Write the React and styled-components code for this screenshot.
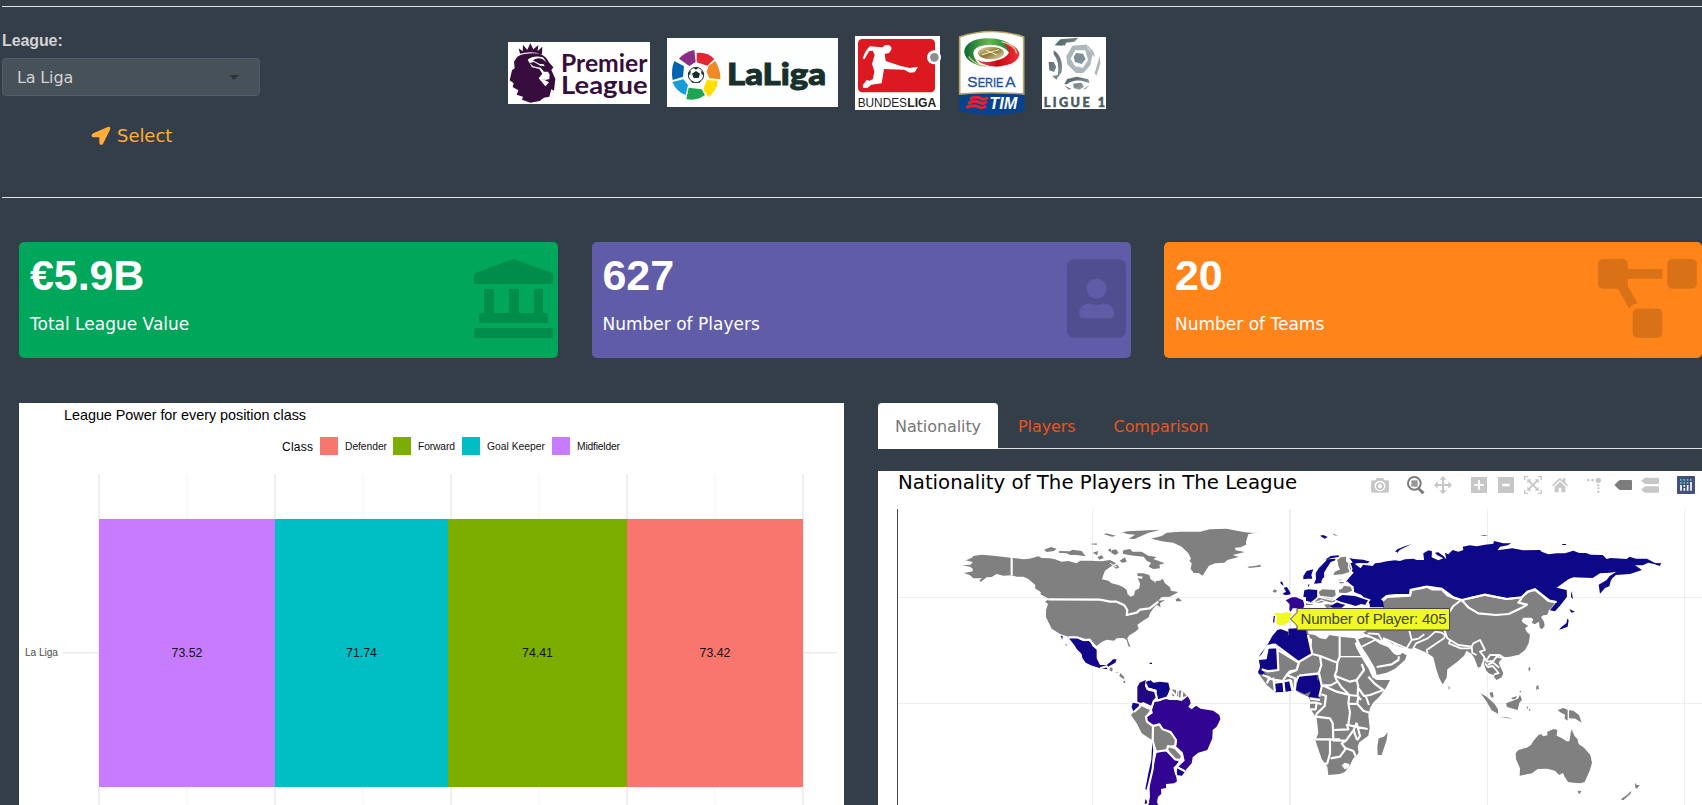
import React from "react";
import styled, { createGlobalStyle } from "styled-components";
import { FaPortrait, FaProjectDiagram } from "react-icons/fa";

const GlobalStyle = createGlobalStyle`
  * { box-sizing: border-box; }
  body {
    margin: 0;
    background: #343e48;
    overflow: hidden;
    font-family: "DejaVu Sans", Verdana, sans-serif;
    font-size: 16px;
    color: #fff;
  }
  svg { display: block; }
`;

const Page = styled.main`
  height: 805px;
  overflow: hidden;
  padding-top: 6px;
`;

const FilterBar = styled.section`
  display: flex;
  height: 192px;
  margin-left: 2px;
  border-top: 1px solid #dee2e6;
  border-bottom: 1px solid #dee2e6;
`;

const FilterColumn = styled.div`
  width: 506px;
  padding-top: 24px;
`;

const Label = styled.label`
  display: block;
  font: bold 16px/20px "Liberation Sans", Arial, sans-serif;
  letter-spacing: -0.1px;
  color: #d3d3d3;
`;

const SelectBox = styled.div`
  display: flex;
  align-items: center;
  justify-content: space-between;
  width: 258px;
  height: 38px;
  margin-top: 7px;
  padding: 0 20px 0 14px;
  border: 1px solid #4e5d6c;
  border-radius: 4px;
  background: #46515a;
  color: #d3d3d3;
  font-size: 16px;
  letter-spacing: -0.15px;
`;

const Caret = styled.span`
  border: 5px solid transparent;
  border-top-color: #333;
  border-bottom: 0;
`;

const SelectButton = styled.button`
  display: flex;
  align-items: center;
  gap: 6px;
  margin: 28px 0 0 89px;
  padding: 0;
  border: 0;
  background: none;
  color: #ffac38;
  font: 18px/24px "DejaVu Sans", Verdana, sans-serif;
  letter-spacing: -0.05px;
`;

const Logos = styled.div`
  display: flex;
  align-items: center;
  gap: 17px;
  height: 131px;
  svg { overflow: visible; }
  svg:nth-child(4) { margin-left: 2px; }
`;

const Cards = styled.section`
  display: grid;
  grid-template-columns: 539px 539px 538px;
  justify-content: space-between;
  padding: 44px 0 0 19px;
`;

const Card = styled.article`
  display: flex;
  justify-content: space-between;
  height: 116px;
  padding: 17px 5px 0 11px;
  border-radius: 5px;
  background: ${(p) => p.$color};
`;

const CardIcon = styled.div`
  color: rgba(0, 0, 0, 0.15);
  svg { width: ${(p) => p.$width}px; height: 79px; }
`;

const Value = styled.h3`
  margin: -8px 0 0;
  font: bold 43px/48px "Liberation Sans", Arial, sans-serif;
  letter-spacing: -0.1px;
`;

const Caption = styled.p`
  margin: 13px 0 0;
  font-size: 17px;
  line-height: 24px;
`;

const Panels = styled.section`
  display: grid;
  grid-template-columns: 825px 824px;
  gap: 34px;
  padding: 45px 0 0 19px;
`;

const ChartPanel = styled.div`
  height: 402px;
  background: #fff;
`;

const Tabs = styled.nav`
  display: flex;
  height: 46px;
  border-bottom: 1px solid #dee2e6;
`;

const Tab = styled.a`
  height: 46px;
  padding: 0 ${(p) => (p.$active ? 17 : 20)}px;
  border-radius: 4px 4px 0 0;
  background: ${(p) => (p.$active ? "#fff" : "transparent")};
  color: ${(p) => (p.$active ? "#777" : "#e95420")};
  line-height: 47px;
  font-size: 16px;
  letter-spacing: -0.08px;
  & + & { padding-right: 18px; }
`;

const MapPanel = styled.div`
  height: 334px;
  margin-top: 22px;
  background: #fff;
`;

const MapHeader = styled.header`
  display: flex;
  justify-content: space-between;
  height: 30px;
  padding: 0 7px 0 20px;
`;

const MapTitle = styled.h4`
  margin: 0;
  color: #000;
  font-size: 19.75px;
  font-weight: 400;
  line-height: 24px;
  white-space: nowrap;
`;

const ModeBar = styled.div`
  display: flex;
  gap: 18px;
  padding-top: 5px;
`;

const ModeGroup = styled.div`
  display: flex;
  gap: 9px;
`;

function Premier() {
  return (
    <svg width="142" height="62" viewBox="54 66 426 186">
      <rect x="54" y="66" width="426" height="186" fill="#fff" />
      <path fill="#370d3d" d="M90 101 L86 85 L98 94 L99 75 L112 89 L121 70 L130 88 L145 75 L143 93 L157 80 L156 103 Q123 91 90 101Z M82 110 Q105 97 150 101 Q170 110 176 126 L190 142 L184 150 L196 177 L192 212 L184 208 L178 230 L162 233 L149 243 L121 248 L96 239 L99 230 L80 224 L85 211 L68 201 L71 190 L59 181 L66 151 L74 145 L72 125Z" />
      <path fill="#fff" d="M113 119 Q132 104 159 112 L170 127 L158 118 Q144 111 128 121 L149 132 L161 133 L179 164 L178 177 L166 180 L156 176 L177 187 L166 199 L153 183 L146 175 L157 161 L148 147 L126 142Z" />
      <path fill="#370d3d" d="M119 129 L132 126 L151 137 L169 139 L176 155 L162 155 L152 143 L130 139Z" />
      <g fill="#370d3d" fontFamily="Lato, sans-serif" fontWeight="700" fontSize="76">
        <text x="213" y="157" textLength="259" lengthAdjust="spacingAndGlyphs">Premier</text>
        <text x="213" y="222" textLength="260" lengthAdjust="spacingAndGlyphs">League</text>
      </g>
    </svg>
  );
}

function LaLiga() {
  return (
    <svg width="171" height="69" viewBox="531 54 513 207">
      <rect x="531" y="54" width="513" height="207" fill="#fdfefe" />
      <path fill="#8a2d87" d="M567 116 Q584 96 613 90 L617 126 L598 138Z" />
      <path fill="#e32832" d="M620 99 Q650 94 673 117 L652 137 L620 127Z" />
      <path fill="#f18a25" d="M656 137 L676 123 Q692 149 691 178 L658 175 L650 155Z" />
      <path fill="#ffde00" d="M650 180 L684 182 Q680 212 655 232 L640 208Z" />
      <path fill="#1da651" d="M596 203 L635 208 L645 225 Q620 244 589 237Z" />
      <path fill="#189cd9" d="M547 186 L580 178 L594 195 L587 225 Q560 216 547 186Z" />
      <path fill="#0063b0" d="M553 123 L582 139 L579 170 L548 180 Q542 150 553 123Z" />
      <circle cx="618" cy="165" r="23" fill="#fff" stroke="#18302b" strokeWidth="3" />
      <path fill="#18302b" d="M618 153 L630 161 L626 174 L611 174 L606 161Z M610 143 L625 143 L618 149Z M594 160 L603 152 L600 166Z M642 160 L632 152 L636 166Z M604 181 L613 187 L606 188Z M624 187 L633 181 L629 189Z" />
      <text x="711" y="194" textLength="297" lengthAdjust="spacingAndGlyphs" fontFamily="Lato, sans-serif" fontWeight="900" fontSize="91" fill="#18302b" stroke="#18302b" strokeWidth="3">LaLiga</text>
    </svg>
  );
}

function Bundesliga() {
  return (
    <svg width="85" height="74" viewBox="45 48 255 222">
      <rect x="45" y="48" width="255" height="222" fill="#fff" />
      <rect x="54" y="57" width="231" height="160" rx="13" fill="#dc1920" />
      <circle cx="282" cy="112" r="21" fill="#fff" />
      <circle cx="283" cy="112" r="13" fill="#8b8d8e" />
      <path fill="#fff" d="M68 116 Q76 89 90 79 L115 81 L128 82 Q133 73 146 75 Q158 81 153 91 L147 99 L134 102 L137 123 L180 137 L209 144 L234 140 L224 157 L210 158 L192 149 L132 147 L125 190 L94 194 L83 203 L70 204 L68 196 L80 180 L89 182 L99 177 L103 154 L96 132 L104 105 L98 92 L88 93 L80 106 L74 117Z" />
      <text x="53" y="261" fontFamily="Liberation Sans, sans-serif" fontSize="38" fill="#222" textLength="148" lengthAdjust="spacingAndGlyphs">BUNDES</text>
      <text x="202" y="261" fontFamily="Liberation Sans, sans-serif" fontSize="38" fontWeight="700" fill="#222" textLength="87" lengthAdjust="spacingAndGlyphs">LIGA</text>
    </svg>
  );
}

function SerieA() {
  return (
    <svg width="66" height="84" viewBox="357 30 198 252">
      <defs>
        <linearGradient id="gold" x2="1" y2="1"><stop stopColor="#ece5bd" /><stop offset=".5" stopColor="#8b7738" /><stop offset="1" stopColor="#ece5bd" /></linearGradient>
        <linearGradient id="green" x2="1"><stop stopColor="#0b6832" /><stop offset=".5" stopColor="#68b74c" /><stop offset="1" stopColor="#087537" /></linearGradient>
        <linearGradient id="red" x2="1"><stop stopColor="#ed5360" /><stop offset=".5" stopColor="#c90713" /><stop offset="1" stopColor="#f03337" /></linearGradient>
      </defs>
      <path d="M359 48 Q455 15 551 48 V219 H359Z" fill="#fff" stroke="#b6a768" strokeWidth="5" />
      <path d="M358 221 Q455 213 553 221 V271 Q455 293 358 271Z" fill="#07428c" />
      <path d="M358 219 Q455 211 553 219" fill="none" stroke="#b6a768" strokeWidth="4" />
      <path fill="url(#green)" d="M426 137 Q370 120 373 88 Q381 56 435 52 Q493 49 522 79 L506 93 Q484 68 439 72 Q399 76 400 99 Q404 120 426 137Z" />
      <path fill="url(#red)" d="M408 114 Q429 128 463 120 Q500 112 506 96 Q508 82 488 64 Q536 75 538 99 Q534 133 469 137 Q426 135 408 114Z" />
      <path fill="none" stroke="#d1c795" strokeWidth="4" d="M386 107 Q406 133 439 136 M484 62 Q528 74 530 98" />
      <ellipse cx="453" cy="96" rx="39" ry="19" fill="url(#gold)" />
      <path d="M426 101 L477 86 M439 88 L471 102" stroke="#fff3bc" strokeWidth="3" />
      <g fontFamily="Liberation Sans, sans-serif" fill="#20549a" stroke="#20549a" strokeWidth="1">
        <text x="382" y="197" fontSize="46">S</text>
        <text x="413" y="197" fontSize="38" textLength="77" lengthAdjust="spacingAndGlyphs">ERIE</text>
        <text x="496" y="197" fontSize="46">A</text>
      </g>
      <path d="M390 234 Q407 224 422 232 Q434 239 444 229 M384 247 Q402 237 418 244 Q431 251 441 242 M379 260 Q398 250 414 257 Q429 264 438 255" fill="none" stroke="#df2532" strokeWidth="9" />
      <text x="448" y="265" fontFamily="Liberation Sans, sans-serif" fontWeight="700" fontStyle="italic" fontSize="48" fill="#fff" textLength="84" lengthAdjust="spacingAndGlyphs">TIM</text>
    </svg>
  );
}

function LigueOne() {
  return (
    <svg width="64" height="72" viewBox="606 51 192 216">
      <defs><linearGradient id="steel" x2="1" y2="1"><stop stopColor="#46545c" /><stop offset="1" stopColor="#a4b0b2" /></linearGradient></defs>
      <rect x="606" y="51" width="192" height="216" fill="#fff" />
      <path fill="url(#steel)" d="M644 76 L661 58 L715 53 L703 65 L677 68 L667 77Z M661 72 L680 66 L674 77Z M641 91 Q671 111 665 156 L649 179 L637 168 L653 165 Q660 125 641 103Z M626 126 L641 126 L649 141 L642 156 L628 151Z" />
      <path fill="#aeb7ba" fillRule="evenodd" d="M679 109 L697 77 L733 74 L758 101 L751 136 L730 159 L708 159 L682 133Z M692 116 L706 91 L736 91 L744 120 L729 143 L705 139Z" />
      <path fill="#7e9098" d="M708 99 L729 101 L737 117 L725 132 L705 126 L701 111Z" />
      <path fill="#afb7b7" d="M736 72 Q766 92 764 112 L755 101 Q751 85 733 78Z M779 108 L781 132 L769 168 L764 159 L773 129Z" />
      <path fill="url(#steel)" d="M673 192 L682 177 L711 170 L745 178 L749 190 L737 186 Q704 175 681 193Z M700 191 L724 188 L732 200 L718 209 L701 204Z M673 197 L694 206 L687 209Z M748 195 L737 208 L729 208Z" />
      <text x="611" y="262" fontFamily="Lato, sans-serif" fontWeight="900" fontSize="38" fill="#4c5961" stroke="#4c5961" strokeWidth="1.5" textLength="184">LIGUE 1</text>
    </svg>
  );
}

function ArrowIcon() {
  return (
    <svg width="20" height="20" viewBox="272 376 60 60" fill="currentColor">
      <path d="M322 379Q332 376 329 387L309 428Q307 433 302 433Q297 432 297 426V410H280Q274 410 274 405Q273 401 279 398Z" />
    </svg>
  );
}

function BankIcon() {
  return (
    <svg viewBox="0 0 79 79" fill="currentColor">
      <path d="M39.5 0 78 14Q79 14.4 79 16V23Q79 25 77 25H2Q0 25 0 23V16Q0 14.4 1 14Z M10 30H20V54H35V30H45V54H60V30H69V54H72Q74 54 74 57V64H5V57Q5 54 7 54H10Z M2 69H77Q79 69 79 71V77Q79 79 77 79H2Q0 79 0 77V71Q0 69 2 69Z" />
    </svg>
  );
}

const series = [
  { name: "Midfielder", value: "73.52", x: 99, w: 176, color: "#c77cff" },
  { name: "Goal Keeper", value: "71.74", x: 275, w: 173, color: "#00bfc4" },
  { name: "Forward", value: "74.41", x: 448, w: 179, color: "#7cae00" },
  { name: "Defender", value: "73.42", x: 627, w: 176, color: "#f8766d" },
];

const legend = [
  { name: "Defender", x: 320, w: 42, color: "#f8766d" },
  { name: "Forward", x: 393, w: 37, color: "#7cae00" },
  { name: "Goal Keeper", x: 462, w: 58, color: "#00bfc4" },
  { name: "Midfielder", x: 552, w: 43, color: "#c77cff" },
];

function PowerChart() {
  return (
    <svg width="825" height="402" viewBox="19 403 825 402" fontFamily="Liberation Sans, Helvetica, sans-serif">
      {[99, 187, 275, 363, 451, 539, 627, 715, 803].map((x, i) => (
        <path key={x} d={`M${x} 474V805`} stroke={i % 2 ? "#f3f3f3" : "#ebebeb"} strokeWidth={i % 2 ? 1 : 1.6} />
      ))}
      <path d="M63 652.7H837" stroke="#ebebeb" strokeWidth="1.5" />
      <text x="64" y="420" fontSize="14.4" textLength="242" fill="#000">League Power for every position class</text>
      <text x="282" y="451" fontSize="12" textLength="31" fill="#000">Class</text>
      {legend.map((l) => (
        <g key={l.name}>
          <rect x={l.x} y="437" width="18" height="18" fill={l.color} />
          <text x={l.x + 25} y="450" fontSize="10.3" textLength={l.w} fill="#111">{l.name}</text>
        </g>
      ))}
      {series.map((s) => (
        <g key={s.name}>
          <rect x={s.x} y="519" width={s.w} height="268" fill={s.color} />
          <text x={s.x + s.w / 2} y="656.8" fontSize="12.3" textAnchor="middle" fill="#111">{s.value}</text>
        </g>
      ))}
      <text x="25" y="656.3" fontSize="10.2" textLength="33" fill="#4d4d4d">La Liga</text>
    </svg>
  );
}

const Tool = ({ x, color = "#c7c7c7", children }) => (
  <svg width="18" height="18" viewBox={`${x} 24 54 54`} fill={color}>{children}</svg>
);

function MapTools() {
  return (
    <ModeBar>
      <Tool x={33}><path fillRule="evenodd" d="M39 37H46L50 30H69L73 37H82Q87 37 87 42V69Q87 74 82 74H38Q33 74 33 69V42Q33 37 39 37Z M60 38A16 16 0 1 0 60.1 38Z" /><path fillRule="evenodd" d="M60 43A12 12 0 1 0 60.1 43Z M60 49A6 6 0 1 1 59.9 49Z" /></Tool>
      <ModeGroup>
        <Tool x={141} color="#7c7c7c"><path fillRule="evenodd" d="M163 24A22 22 0 1 0 163.1 24Z M163 30A16 16 0 1 1 162.9 30Z" /><path d="M154 37H173V56H154Z" opacity=".8" /><path d="M177 58L194 73L187 79L171 63Z" /></Tool>
        <Tool x={222}><path d="M249 24L260 35H252V48H265V40L276 51L265 62V54H252V67H260L249 78L238 67H246V54H233V62L222 51L233 40V48H246V35H238Z" /></Tool>
      </ModeGroup>
      <ModeGroup>
        <Tool x={330}><path fillRule="evenodd" d="M333 27H381V75H333Z M354 37H360V48H371V54H360V65H354V54H343V48H354Z" /></Tool>
        <Tool x={411}><path fillRule="evenodd" d="M414 27H462V75H414Z M427 47H449V55H427Z" /></Tool>
        <Tool x={492}><path d="M492 24H504V28H496V36H492Z M534 24H546V36H542V28H534Z M492 66H496V74H504V78H492Z M542 66H546V78H534V74H542Z M502 34H514L510 38L519 47L528 38L524 34H536V46L532 42L523 51L532 60L536 56V68H524L528 64L519 55L510 64L514 68H502V56L506 60L515 51L506 42L502 46Z" /></Tool>
        <Tool x={573}><path d="M576 52L600 29L609 38V31H616V45L624 52L620 55L600 36L580 55Z M584 56L600 41L616 56V73H604V59H596V73H584Z" /></Tool>
      </ModeGroup>
      <ModeGroup>
        <Tool x={681}><path d="M681 33H688V40H681Z M694 33H701V40H694Z M712 48H718V54H712Z M712 58H718V64H712Z M712 68H718V75H712Z" /><circle cx="715" cy="37" r="8" /></Tool>
        <Tool x={762} color="#7c7c7c"><path d="M763 51L776 38Q777 36 781 36H813Q816 36 816 39V63Q816 66 813 66H781Q777 66 776 64Z" /></Tool>
        <Tool x={843}><path d="M843 38L855 29H894Q897 29 897 32V45Q897 48 894 48H855Z M843 65L855 55H894Q897 55 897 58V71Q897 74 894 74H855Z" /></Tool>
      </ModeGroup>
      <Tool x={951} color="#42517c"><rect x="951" y="24" width="54" height="54" rx="2" /><path stroke="#fff" strokeWidth="5" d="M963 51V68M973 60V68M973 51V56M983 51V68M993 42V68" /><g fill="#68beb2"><path d="M960 33H965V38H960Z M970 33H975V38H970Z M980 33H985V38H980Z M990 33H995V38H990Z M960 42H965V47H960Z M970 42H975V47H970Z M980 42H985V47H980Z" /></g></Tool>
    </ModeBar>
  );
}

/* Western hemisphere, in thirds of a pixel. */
function Americas() {
  return (
    <g transform="translate(940 500) scale(.33333)" fill="#808080">
      <path d="M80 180L96 173L100 168L125 164L160 167L212 173L220 174L250 178L268 176L295 169L305 174L330 175L345 178L365 185L385 183L410 190L420 182L450 182L485 184L510 180L528 190L505 205L495 212L490 225L486 238L505 242L515 250L535 255L550 262L560 270L563 283L572 290L582 286L585 272L598 265L600 250L593 235L592 220L610 220L628 225L632 238L645 243L660 242L668 236L675 250L690 262L693 272L715 276L700 284L690 290L665 291L655 302L675 300L660 310L662 322L650 315L640 325L630 340L626 352L607 364L592 374L596 386L585 396L568 406L562 415L565 425L572 442L565 438L560 420L550 414L530 415L522 422L500 419L485 426L470 438L450 422L430 415L410 410L385 410L360 402L335 386L318 352L318 330L324 312L315 305L328 297L301 283L303 277L285 265L286 255L265 237L250 230L230 230L215 226L190 227L170 222L155 231L140 232L122 246L118 240L127 235L100 235L90 226L72 219L98 214L98 206L90 200L66 196L92 194L98 186L76 181Z" />
      <path d="M633 116L665 108L680 98L720 95L780 95L810 88L860 86L890 92L916 97L940 99L962 95L925 103L918 125L918 134L902 142L885 143L887 151L914 156L900 160L878 165L896 171L862 180L853 188L825 190L807 197L796 214L788 227L776 219L762 220L752 207L755 190L748 182L753 176L745 160L725 140L700 128L665 124L650 120Z" />
      <path d="M922 200L944 198L962 194V200L928 204Z M707 298L716 293L726 304L708 304Z M312 149L333 141L350 146L342 153L320 156Z M358 153L390 154L397 149L425 153L437 169L408 165L390 165L380 160L356 158Z M492 103L498 100L528 107L516 110Z M546 97L563 94L659 89L624 99L584 117L566 116L586 104L562 102Z M550 151L570 147L578 155L605 155L625 167L650 171L640 177L674 190L658 194L660 205L640 207L626 200L633 188L620 182L611 170L570 166L548 161Z M515 151L528 148L536 158L526 165L515 160Z M458 158L474 153L472 166Z M472 171L486 166L491 174L478 179Z M539 182L555 172L560 186L546 188Z M520 199L532 194L538 203L528 206Z M450 132L470 130L470 135Z M503 150L512 145L515 158Z M512 501L520 508L517 516L508 510Z M525 515L538 519L527 519Z M541 519L553 532L551 538L538 528Z M694 568L708 570V592L697 587Z M712 575L724 570L721 594L711 588Z M728 572L740 588L729 591Z" />
      <g fill="#130789">
        <path d="M384 411L397 412L414 413L422 420L432 424L445 422L455 428L456 437L470 449V475L480 495L500 495L512 485L519 478L530 478L526 488L508 498L503 508L480 505L453 496L437 488L427 474L425 462L410 447L403 435L398 429Z M362 407L368 408L367 419Z M376 432L381 435L378 437Z M629 488H636V492H629Z M618 545L632 541L640 548L660 545L685 548L690 570L680 590L655 602L650 585L650 570L622 562Z M578 608L600 612L600 620L580 634L575 622Z M712 805L738 810L726 827L708 825Z M637 725L643 730L640 790L628 850L620 870L616 868L625 820L634 780Z M616 898L622 901L621 910L614 912Z M552 542L557 548L550 547Z" />
      </g>
      <path fill="#210681" d="M592 560L599 548L617 540L615 558L624 572L650 577L650 590L640 600L635 620L610 612L592 605Z" />
      <path d="M600 615L632 628L616 650L620 668L638 680L636 720L605 700L590 670L573 645Z M640 680L658 676L668 688L690 700L708 720L703 735L685 738L680 750L650 752L640 735Z M685 740L705 745L722 762L727 775L718 783L702 778L685 755Z" />
      <path fill="#310591" d="M640 605L662 603L668 595L690 600L710 600L725 603L743 589L750 601L752 610L745 620L755 628L768 617L782 626L820 632L838 645L841 658L830 680L818 690L817 715L802 750L775 758L758 772L755 790L735 812L715 800L734 782L728 757L708 739L710 720L690 695L668 686L660 672L640 675L625 670L617 655L620 647L635 638Z M650 757L660 752L680 755L700 775L716 785L704 804L711 844L703 850L678 852L678 864L663 867L664 881L654 891L651 907L655 915L625 915L630 890L628 850L640 800Z" />
      <g fill="none" stroke="#fff" strokeWidth="6.5" strokeLinejoin="round">
        <path d="M215 170V226 M325 298L480 299L510 305L530 305L553 316L562 330L560 345L590 338L600 329L629 325L655 305 M385 412L410 412L432 420L449 419L457 430L464 438 M480 505L500 499L508 508 M618 553L622 566L645 572L652 600L641 604L635 622L610 610L600 613L600 620L582 636 M650 602L684 592L692 570L706 585L703 600 M600 613L632 628L635 638L618 650L621 665L639 678L638 723L648 756L680 750L705 778L721 780L727 768L706 745L684 738L680 752 M639 678L658 673L668 688L692 696L708 720L706 737 M727 780L704 804L709 825 M714 803L735 814 M640 728L643 750L638 807L628 850L619 885L625 910 M590 231L607 233 M524 503L519 516L551 510" />
        <path d="M510 190L530 201 M632 236L648 247 M592 236L590 260 M715 574V597 M730 570L725 598" strokeWidth="3" />
      </g>
    </g>
  );
}

function EasternLands() {
  return (
    <g transform="translate(1240 500) scale(.33333)" fill="#808080">
      {/* Asia */}
      <path d="M425 300L440 288L510 285L512 270L530 267L548 262L560 260L575 267L605 265L622 283L640 293L665 300L735 285L800 297L850 292L862 275L885 270L905 285L925 302L950 306L940 322L927 330L922 344L910 346L903 351L912 365L914 378L906 388L899 383L897 365L884 373L875 368L880 358L873 353L850 353L845 362L849 368L865 378L855 384L860 395L870 404L866 430L855 450L837 464L810 470L790 472L779 484L776 488L790 520L785 532L770 540L762 532L764 526L740 518L735 500L727 485L722 500L714 503L703 474L694 461L680 452L672 467L652 485L622 508L620 533L608 553L598 535L588 505L585 492L580 472L560 458L525 443L515 446L475 440L455 430L430 412L425 427L405 418L392 412L380 404L370 398L380 392V360L430 325Z" />
      <path d="M354 418L375 411L395 415L420 432L445 442L460 460L470 466L482 464L486 458L500 466L495 480L465 506L440 518L410 525L405 505L385 470L365 440Z" />
      <path d="M626 556L630 565L626 569Z M868 500L872 506L867 515L865 506Z M722 580L740 590L755 604L764 612L774 628V641L755 631L740 605Z M748 578L758 576L761 590L754 593Z M798 610L816 603L834 596L840 584L846 600L838 608L833 630L814 625L801 621Z M780 652H800L820 657L804 655Z M860 620H865L862 628Z M867 625L872 630L867 633Z M815 593L831 588L826 597L815 598Z M840 571L844 576L839 578Z M889 559L895 555L897 568L892 566L888 571Z M953 630L970 624L985 630L1000 632L1017 645L1025 668L1006 656L985 654L983 662L974 656L975 644L961 637Z" />
      <path d="M827 760L835 750L860 743L873 735L880 723L896 704L905 703L909 709L922 706L922 695L941 687L952 690L950 707L965 714L980 724L988 724L992 700L995 688L1004 709L1012 716L1016 732L1032 743L1051 765L1056 788L1050 810L1034 846L1021 850L1000 848L984 846L974 830L969 819L957 825L945 812L921 806L893 807L876 820L839 827L840 805L828 777Z M1013 872L1024 873L1020 881L1015 880Z M1142 898L1162 884L1174 872L1172 881L1158 893L1150 901Z M1186 848L1190 855L1199 855L1191 866L1185 861Z" />
      {/* Europe */}
      <path d="M285 214L300 209L292 190L292 180L302 172L318 170L318 184L325 190L323 204L330 215L307 223L280 225Z M236 275L248 268L285 270L287 286L278 292L240 287Z M296 270L306 266L312 257L332 260L337 272L319 279L298 278Z M298 246H311V250H298Z M295 239H306V241H295Z M252 293L270 296L288 302L280 309L260 304L240 308L222 309L227 295Z M199 308L220 307L218 314L197 316Z M252 314L273 311L280 322L260 324Z M98 275L102 268L112 272L106 278Z" />
      <path fill="#0f0788" d="M190 228L200 213L220 208L214 224L217 236L203 236L190 238Z M222 251L228 237L227 220L236 205L248 193L262 178L285 176L287 181L272 186L260 205L252 218L253 230L245 240L244 250L229 253Z M193 271L205 268L232 270V292L213 306L198 302L198 292L190 290Z M204 255L208 252L207 263Z M131 263L141 261L150 276L152 283L137 286L127 281L138 275Z M120 248L126 244L131 257L126 254Z M270 319L291 307L316 315L305 323H278Z M295 292L307 285L345 288L372 292L390 301L380 316L364 312L347 318L330 313L302 305L287 299Z M240 107L250 105L263 111L254 116Z M280 102L294 107L282 105Z M255 179L272 168L295 166L298 170L274 175Z" />
      <path fill="#310591" d="M137 301L156 292L168 292L190 301L193 316L190 325H158L152 335L148 330L149 313Z" />
      <path fill="#f0f921" d="M104 340L110 338L122 340L143 337L157 341L150 350L147 367L132 375L117 376L108 369L111 347L104 345Z" />
      <path fill="#310591" d="M101 349L105 347L103 367L99 368Z" />
      {/* Africa */}
      <path d="M112 390L125 388L145 395L195 383L205 395L205 402L225 405L240 415L258 418L268 405L300 410L345 415L350 425L344 430L351 448L375 490L385 505L397 532L408 539L420 540L450 540L440 560L420 588L398 610L390 625L385 645L389 685L385 707L358 727L353 740L356 757L350 767L340 775L330 795L315 815L300 822L265 825L262 800L245 777L226 721L235 700L230 655L210 625L210 600L205 590L180 580L165 570L130 575L105 575L80 555L55 520L62 500L57 482L80 480L85 447L110 445L103 430Z M443 697L440 720L425 765L413 765L412 740L416 715L432 710Z" />
      <path fill="#0f0788" d="M112 390L122 388L144 396L144 406L104 430L80 435L65 463L55 472L85 430L97 408Z M145 386L195 383L200 400L210 443L216 462L177 487L101 431L146 405Z M109 446L115 509H64L55 518L60 500L57 480L80 478L87 446Z M54 512L66 509L78 526L56 521Z M105 550L128 548L131 576L105 577Z M133 545L150 542L154 572L137 575Z M176 529L233 526L232 542L216 574L194 582L168 570Z M215 570L237 535L243 563L238 594L205 590Z" />
      <g fill="none" stroke="#fff" strokeWidth="6.5" strokeLinejoin="round">
        <path d="M103 432L176 486L217 462L204 405 M107 436L112 445L115 510L83 514L65 508 M114 450L176 488L170 510L142 522L128 543L82 535 M177 487L170 510L150 514L140 525L165 535L164 570 M217 462L240 468L292 488L290 512L284 527L292 545L272 556L246 556L238 590 M217 462L212 442L213 416 M299 410V474 M298 472L292 488 M240 468L244 495L236 520L177 527 M104 548L128 545L150 540L157 570 M130 543L133 575 M153 540L158 570 M176 527L166 548L164 572 M237 520L246 560 M284 527L330 545L350 540L372 510L365 492 M290 540L303 560L328 585L353 588L354 563L372 588L390 585L430 570L405 552L385 530 M350 540L355 560 M247 556L290 575L328 585L325 610L330 637L325 675L345 680L383 687 M244 583L258 588L254 618L230 641L227 653 M228 650L270 655L278 670L279 690L325 688L320 672 M279 690L280 721L318 722L341 690L350 668 M225 718H300 M270 718V760L262 790L240 794 M272 775L300 770L318 745L340 753L350 775 M318 722L305 731L318 747 M355 587L352 612L370 632L388 638 M328 611L353 612 M363 600L355 590 M206 608L230 608L245 613 M211 628L227 628L230 608 M68 525L90 533L80 550 M100 533L105 575 M210 596L240 600 M350 670L360 708L351 721 M341 690L350 718 M376 585L387 615" />
        <path strokeWidth="4" d="M298 470H370" />
        <path strokeWidth="5.5" d="M380 405L430 428L415 402L383 400 M365 440L405 420 M430 414L500 445L515 420L508 392 M515 420L535 416L553 403 M519 446L528 430L563 415L586 395L605 398L615 405L612 415L560 450L563 460 M613 390L622 415L655 435L695 440L700 430L720 420L735 450L720 455L732 470L740 485L760 483L770 470L794 475L779 465L750 465L740 480 M630 420L627 430L662 445L692 445 M695 440L697 459L710 465 M733 475L728 496L735 512L752 530 M744 494L758 487L778 503 M735 490L744 501L758 498L776 519L762 523" />
        <path d="M640 293L664 300L640 318L624 342 M665 300L686 323L715 340L768 345L806 342L844 324L861 314L835 308L845 295 M665 300L695 293L733 284L800 297L845 292L863 275L885 270L905 285L925 303L950 307L935 328 M428 303L440 291L510 287L514 270L548 264L560 260L575 268L605 268L622 286L640 293 M460 430L486 450 M410 501L455 493L475 480L477 469" />
        <path strokeWidth="4" d="M190 302L205 310L220 310L245 300L270 312L292 304L310 312 M235 270V290L220 308 M290 270L294 290L277 301L240 292 M985 624V664" />
      </g>
      <path fill="#fff" d="M305 796L314 788L328 792L326 803L314 808Z M425 433L475 440L480 458L470 461L440 435Z" />
      <path fill="#0d0887" d="M328 174L342 177L370 179L390 185L382 190L356 189L344 191L362 205L369 194L398 198L405 190L420 188L440 184L465 181L480 183L495 178L520 176L530 180L552 180L550 160L566 151L576 154L575 172L595 181L610 175L591 165L585 158L595 157L610 168L619 178L615 158L625 163L638 150L655 155L670 150L668 140L690 136L710 139L735 134L760 131L762 123L790 130L814 130L803 136L780 140L773 151L817 145L850 151L900 150L905 155L925 163L950 160L975 160L1000 152L1018 159L1038 159L1052 164L1088 165L1100 177L1112 174L1160 177L1169 170L1188 176L1221 176L1245 189L1264 190L1259 198L1245 193L1225 188L1208 196L1185 196L1206 210L1170 222L1128 225L1117 235L1112 243L1108 259L1095 264L1080 281L1076 254L1100 240L1108 229L1129 215L1110 218L1080 220L1058 234L1000 232L985 238L950 263L980 270L981 290L960 317L945 334L930 331L950 305L925 300L905 282L885 268L860 273L845 290L800 294L735 282L695 290L665 299L640 290L600 265L585 264L573 259L560 258L515 268L510 282L470 282L440 285L428 298L432 322H390L388 310L375 298L365 285L340 275L338 258L318 245L330 230L341 218L330 207L328 193L338 187Z" />
      <path fill="#0d0887" d="M465 155L472 148L490 140L515 132L480 149L474 156Z M720 106L733 105L744 108Z M966 132H978V135H968Z M994 272L998 290L998 298L993 290Z M988 327L1005 335L994 338Z M957 389L965 380L979 370L982 356L986 360L983 380L967 386Z M469 150L475 153L472 160Z" />
      <path fill="none" stroke="#fff" strokeWidth="6.5" d="M425 300L440 288L510 285L512 270L560 260L605 266L640 292L665 300L735 284L800 297L845 292L863 275L885 268L905 284L928 302L950 306" />
      <path fill="none" stroke="#fff" strokeWidth="5" d="M222 254L244 252 M287 180L292 190L286 214 M330 192L335 207L329 217 M338 258L340 276L347 286L388 300L378 315" />
      <path fill="none" stroke="#fff" strokeWidth="4" d="M320 245L336 259L340 276" />
    </g>
  );
}

function WorldMap() {
  return (
    <svg width="824" height="304" viewBox="878 501 824 304">
      <path d="M1092.5 509V805M1487.5 509V805M1684.5 509V805M898 597.5H1702M898 703.5H1702" stroke="#eee" />
      <path d="M1290 509V805" stroke="#eee" strokeWidth="2" />
      <path d="M897.5 509V805" stroke="#444" />
      <Americas />
      <EasternLands />
      <path d="M1290.5 619L1297 612.5V608.5H1449.5V630H1297V625.5Z" fill="#f0f921" stroke="#444" />
      <text x="1300.5" y="624" fontFamily="Liberation Sans, Arial, sans-serif" fontSize="15" fill="#444" textLength="146">Number of Player: 405</text>
    </svg>
  );
}

const cards = [
  { value: "€5.9B", caption: "Total League Value", color: "#00a65a", Icon: BankIcon, width: 79 },
  { value: "627", caption: "Number of Players", color: "#605ca8", Icon: FaPortrait, width: 59 },
  { value: "20", caption: "Number of Teams", color: "#ff851b", Icon: FaProjectDiagram, width: 99 },
];

export default function App() {
  return (
    <>
      <GlobalStyle />
      <Page>
        <FilterBar>
          <FilterColumn>
            <Label>League:</Label>
            <SelectBox>La Liga<Caret /></SelectBox>
            <SelectButton><ArrowIcon />Select</SelectButton>
          </FilterColumn>
          <Logos><Premier /><LaLiga /><Bundesliga /><SerieA /><LigueOne /></Logos>
        </FilterBar>
        <Cards>
          {cards.map(({ value, caption, color, Icon, width }) => (
            <Card key={caption} $color={color}>
              <div><Value>{value}</Value><Caption>{caption}</Caption></div>
              <CardIcon $width={width}><Icon /></CardIcon>
            </Card>
          ))}
        </Cards>
        <Panels>
          <ChartPanel><PowerChart /></ChartPanel>
          <div>
            <Tabs><Tab $active>Nationality</Tab><Tab>Players</Tab><Tab>Comparison</Tab></Tabs>
            <MapPanel>
              <MapHeader><MapTitle>Nationality of The Players in The League</MapTitle><MapTools /></MapHeader>
              <WorldMap />
            </MapPanel>
          </div>
        </Panels>
      </Page>
    </>
  );
}
